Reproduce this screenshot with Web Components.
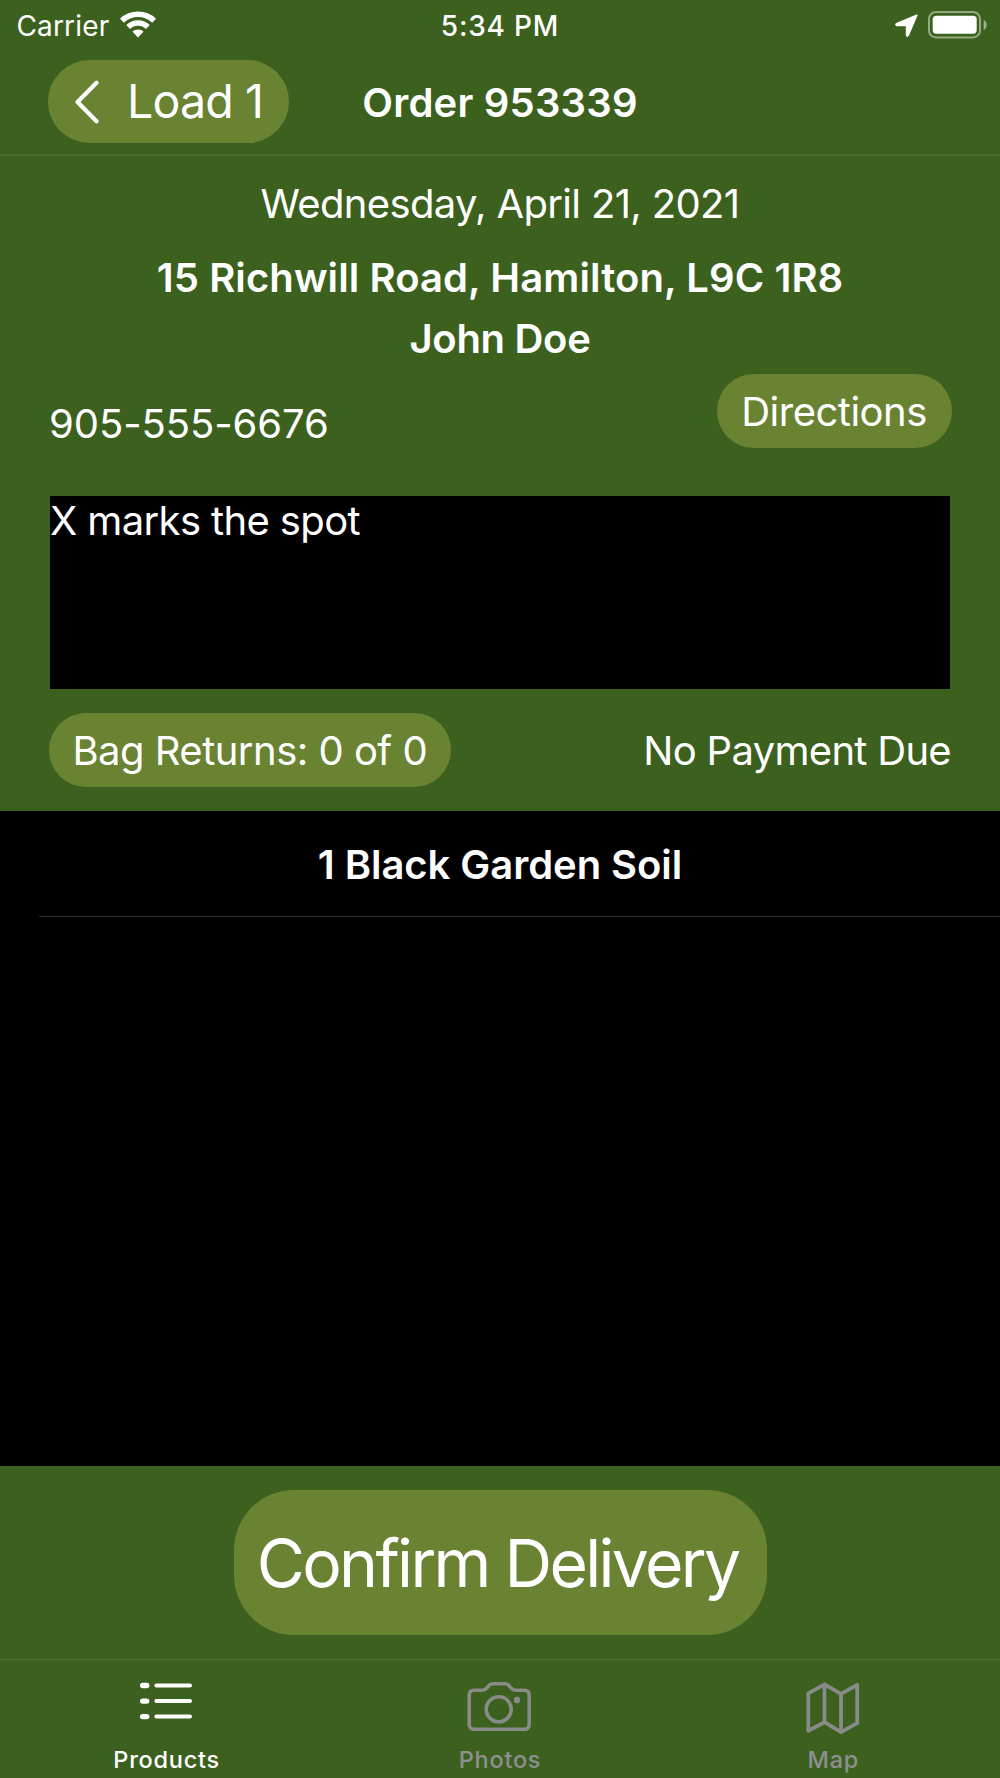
<!DOCTYPE html>
<html lang="en">
<head>
<meta charset="utf-8">
<title>Order 953339</title>
<style>
  :root {
    --green: #3c611e;
    --pill: #698333;
    --line: #4a6d2d;
    --muted: #8e8e93;
  }
  body {
    margin: 0;
    background: #000;
    color: #fff;
    font-family: Inter, "Liberation Sans", sans-serif;
    font-size: 40px;
    line-height: 48px;
  }
</style>
</head>
<body>
<delivery-app></delivery-app>

<script>
// small helper: open shadow root filled from a template
function attach(host, html) {
  const template = document.createElement('template');
  template.innerHTML = html;
  host.attachShadow({ mode: 'open' }).appendChild(template.content.cloneNode(true));
}

class StatusBar extends HTMLElement {
  constructor() {
    super();
    attach(this, `
      <style>
        :host {
          display: grid;
          grid-template-columns: 1fr auto 1fr;
          align-items: center;
          height: 50px;
          padding: 0 13px;
          font-size: 28px;
          line-height: 52px;
        }
        .left, .right { display: flex; align-items: center; }
        .left { gap: 10px; padding-left: 3.5px; letter-spacing: 0.15px; }
        .left svg { margin-bottom: 4px; }
        .right { justify-content: flex-end; gap: 9px; }
        .right svg { margin-bottom: 2px; }
        .time { font-weight: 500; letter-spacing: 0.8px; }
        svg { display: block; }
      </style>
      <div class="left">
        <span>Carrier</span>
        <svg width="38" height="28" viewBox="0 0 38 28" fill="#fff">
          <path d="M1 8.7A26 26 0 0 1 37 8.7L33.2 12.7A20.5 20.5 0 0 0 4.8 12.7Z"/>
          <path d="M7.2 15A17 17 0 0 1 30.8 15L26.9 19A11.5 11.5 0 0 0 11.1 19Z"/>
          <path d="M13.4 21.6A8.2 8.2 0 0 1 24.6 21.6L19 27.4Z"/>
        </svg>
      </div>
      <span class="time">5:34 PM</span>
      <div class="right">
        <svg width="24" height="24" viewBox="0 0 24 24">
          <path d="M21.8 2.2L13.3 22.2Q12.2 24.2 11.6 22V12.4H2Q-.2 11.6 2 10.6Z" fill="#fff" stroke="#fff" stroke-width="1.6" stroke-linejoin="round"/>
        </svg>
        <svg width="59" height="28" viewBox="0 0 59 28">
          <rect x="1" y="1" width="51" height="25.4" rx="7" fill="none" stroke="#fff" stroke-opacity=".45" stroke-width="2"/>
          <rect x="4.7" y="4.7" width="44" height="18" rx="3.6" fill="#fff"/>
          <path d="M55.7 9Q58.7 10.5 58.7 13.9T55.7 19Z" fill="#fff" fill-opacity=".5"/>
        </svg>
      </div>
    `);
  }
}

class PillButton extends HTMLElement {
  constructor() {
    super();
    attach(this, `
      <style>
        :host {
          display: inline-flex;
          align-items: center;
          justify-content: center;
          box-sizing: border-box;
          height: var(--pill-height, 74px);
          border-radius: var(--pill-radius, 37px);
          background: var(--pill);
          white-space: nowrap;
        }
      </style>
      <slot></slot>
    `);
  }
}

class NavHeader extends HTMLElement {
  constructor() {
    super();
    attach(this, `
      <style>
        :host {
          display: grid;
          grid-template-columns: 1fr auto 1fr;
          align-items: start;
          box-sizing: border-box;
          height: 106px;
          padding: 10px 48px 0;
          border-bottom: 2px solid var(--line);
        }
        pill-button {
          --pill-height: 83px;
          --pill-radius: 41.5px;
          justify-self: start;
          width: 241px;
          font-size: 46.5px;
          letter-spacing: -0.86px;
        }
        pill-button span { padding-bottom: 2px; }
        svg { margin-right: 27px; }
        .title {
          font-weight: 600;
          letter-spacing: 0.2px;
          line-height: 85px;
        }
      </style>
      <pill-button>
        <svg width="26" height="44" viewBox="0 0 26 44" fill="none" stroke="#fff" stroke-width="4.2" stroke-linecap="round" stroke-linejoin="round">
          <path d="M22.5 2.8L3.5 22L22.5 41.2"/>
        </svg>
        <span>Load 1</span>
      </pill-button>
      <span class="title">Order 953339</span>
    `);
  }
}

class OrderDetails extends HTMLElement {
  constructor() {
    super();
    attach(this, `
      <style>
        :host {
          display: flex;
          flex-direction: column;
          box-sizing: border-box;
          height: 655px;
          padding: 24px 48.5px 0;
          white-space: nowrap;
        }
        .date, .address, .name { text-align: center; }
        .date { letter-spacing: -0.66px; }
        .address { margin-top: 26px; font-weight: 600; letter-spacing: 0.1px; }
        .name { margin-top: 13px; font-weight: 600; letter-spacing: -0.3px; }
        .row { display: flex; justify-content: space-between; }
        .contact { margin-top: 11px; align-items: flex-end; }
        .phone { padding-left: 0.5px; letter-spacing: -0.07px; }
        .directions { width: 235px; padding-top: 2px; letter-spacing: -0.5px; }
        .notes {
          box-sizing: border-box;
          height: 193px;
          margin: 48px 1.5px 0;
          padding: 1px 0;
          background: #000;
          letter-spacing: -0.63px;
        }
        .payment-row { margin-top: 24px; align-items: center; }
        .bags { width: 402.5px; padding-top: 2px; letter-spacing: -0.52px; }
        .payment { padding: 2px 0.5px 0 0; letter-spacing: -0.7px; }
      </style>
      <div class="date">Wednesday, April 21, 2021</div>
      <div class="address">15 Richwill Road, Hamilton, L9C 1R8</div>
      <div class="name">John Doe</div>
      <div class="row contact">
        <span class="phone">905-555-6676</span>
        <pill-button class="directions">Directions</pill-button>
      </div>
      <div class="notes">X marks the spot</div>
      <div class="row payment-row">
        <pill-button class="bags">Bag Returns: 0 of 0</pill-button>
        <span class="payment">No Payment Due</span>
      </div>
    `);
  }
}

class ProductList extends HTMLElement {
  constructor() {
    super();
    attach(this, `
      <style>
        :host { display: block; background: #000; }
        .item {
          line-height: 107px;
          text-align: center;
          font-weight: 600;
          letter-spacing: -0.05px;
        }
        .separator { height: 1px; margin: -2px 0 0 39px; background: #2c2c2e; }
      </style>
      <div class="item"><slot></slot></div>
      <div class="separator"></div>
    `);
  }
}

class ConfirmBar extends HTMLElement {
  constructor() {
    super();
    attach(this, `
      <style>
        :host {
          display: flex;
          justify-content: center;
          box-sizing: border-box;
          height: 193px;
          padding-top: 24px;
          background: var(--green);
        }
        pill-button {
          --pill-height: 145px;
          --pill-radius: 60px;
          width: 533px;
          padding: 0 5px 0 0;
          font-size: 66px;
          line-height: 80px;
          letter-spacing: -2.7px;
        }
      </style>
      <pill-button>Confirm Delivery</pill-button>
    `);
  }
}

const ICONS = {
  list: `<svg width="56" height="54" viewBox="0 0 56 54" fill="currentColor">
    <rect x="1" y="2.8" width="9.4" height="5.4" rx="2.7"/><rect x="15.4" y="3.5" width="37.6" height="4" rx="2"/>
    <rect x="1" y="18.4" width="9.4" height="5.4" rx="2.7"/><rect x="15.4" y="19.1" width="37.6" height="4" rx="2"/>
    <rect x="1" y="33.9" width="9.4" height="5.4" rx="2.7"/><rect x="15.4" y="34.6" width="37.6" height="4" rx="2"/>
  </svg>`,
  camera: `<svg width="66" height="54" viewBox="0 0 66 54" fill="none" stroke="currentColor" stroke-width="3.6" stroke-linejoin="round">
    <path d="M6.5 10.2H15.5Q18 10.2 19.6 8.2L22.4 5.1Q23.8 3.7 26 3.7H38Q40 3.7 41.4 5.1L44.3 8.2Q46 10.2 48.4 10.2H57.2Q62.2 10.2 62.2 15.2V44.3Q62.2 49.3 57.2 49.3H7.2Q2.2 49.3 2.2 44.3V15.2Q2.2 10.2 7.2 10.2Z"/>
    <circle cx="31.7" cy="29.3" r="12.5"/>
    <circle cx="50" cy="20" r="3.2" fill="currentColor" stroke="none"/>
  </svg>`,
  map: `<svg width="56" height="56" viewBox="0 0 56 56" fill="none" stroke="currentColor" stroke-width="3.8" stroke-linejoin="round" stroke-linecap="round">
    <path d="M3.3 13.3L19.5 4.3L36 13.8L52.2 4.8V43.2L36 52.2L19.5 42.2L3.3 50.8Z M19.5 4.3V42.2 M36 13.8V52.2"/>
  </svg>`,
};

class TabItem extends HTMLElement {
  connectedCallback() {
    if (this.shadowRoot) return;
    attach(this, `
      <style>
        :host {
          display: grid;
          grid-template-rows: 65px 28px;
          justify-items: center;
          padding-top: 20px;
          color: #888b87;
          font-size: 23.5px;
          font-weight: 500;
          line-height: 30px;
          letter-spacing: 0.75px;
        }
        :host([active]) { color: #fff; }
        svg { display: block; }
        .label { color: var(--muted); }
        :host([active]) .label { color: #fff; }
      </style>
      ${ICONS[this.getAttribute('icon')]}
      <span class="label"><slot></slot></span>
    `);
  }
}

class TabBar extends HTMLElement {
  constructor() {
    super();
    attach(this, `
      <style>
        :host {
          display: grid;
          grid-template-columns: repeat(3, 1fr);
          box-sizing: border-box;
          height: 119px;
          border-top: 1px solid #507038;
          background: var(--green);
        }
      </style>
      <slot></slot>
    `);
  }
}

class DeliveryApp extends HTMLElement {
  constructor() {
    super();
    attach(this, `
      <style>
        :host {
          display: flex;
          flex-direction: column;
          width: 1000px;
          height: 1778px;
          overflow: hidden;
        }
        header { background: var(--green); }
        product-list { flex: 1; }
      </style>
      <header>
        <status-bar></status-bar>
        <nav-header></nav-header>
        <order-details></order-details>
      </header>
      <product-list>1 Black Garden Soil</product-list>
      <confirm-bar></confirm-bar>
      <tab-bar>
        <tab-item icon="list" active>Products</tab-item>
        <tab-item icon="camera">Photos</tab-item>
        <tab-item icon="map">Map</tab-item>
      </tab-bar>
    `);
  }
}

customElements.define('status-bar', StatusBar);
customElements.define('pill-button', PillButton);
customElements.define('nav-header', NavHeader);
customElements.define('order-details', OrderDetails);
customElements.define('product-list', ProductList);
customElements.define('confirm-bar', ConfirmBar);
customElements.define('tab-item', TabItem);
customElements.define('tab-bar', TabBar);
customElements.define('delivery-app', DeliveryApp);
</script>
</body>
</html>
